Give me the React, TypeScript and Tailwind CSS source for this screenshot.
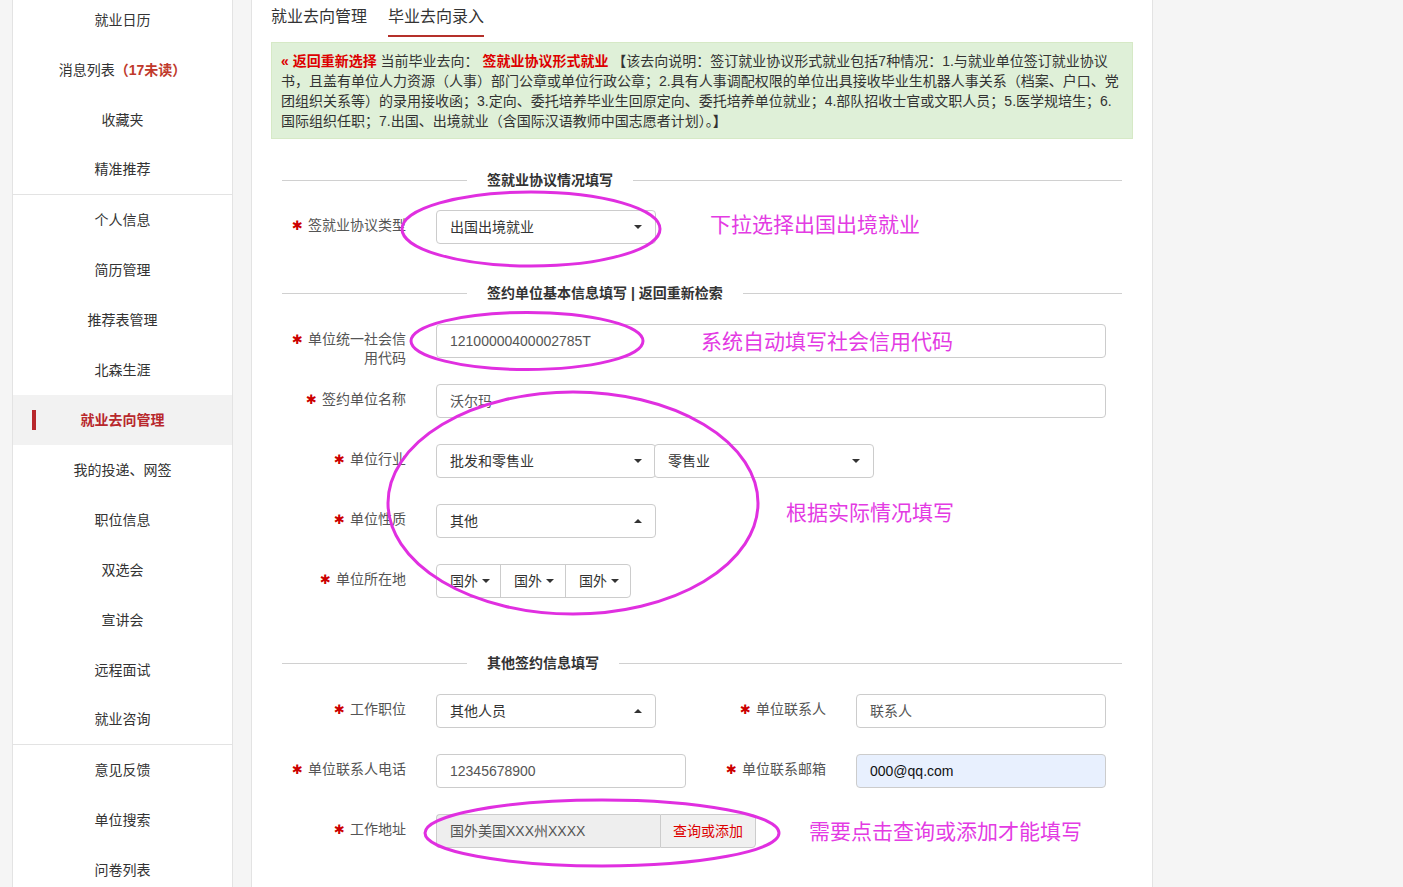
import React from "react";

const sideItems = [
  "就业日历",
  "消息列表",
  "收藏夹",
  "精准推荐",
  "个人信息",
  "简历管理",
  "推荐表管理",
  "北森生涯",
  "就业去向管理",
  "我的投递、网签",
  "职位信息",
  "双选会",
  "宣讲会",
  "远程面试",
  "就业咨询",
  "意见反馈",
  "单位搜索",
  "问卷列表",
];

const Caret = ({ up }: { up?: boolean }) =>
  up ? (
    <span className="inline-block w-0 h-0 border-x-[4px] border-x-transparent border-b-[4px] border-b-[#333]" />
  ) : (
    <span className="inline-block w-0 h-0 border-x-[4px] border-x-transparent border-t-[4px] border-t-[#333]" />
  );

const Label = ({ children, right }: { children: React.ReactNode; right?: boolean }) => (
  <div
    className={
      right
        ? "w-[140px] shrink-0 mr-[30px] pt-[6px] text-right text-[14px] leading-[18px] text-[#555]"
        : "w-[124px] shrink-0 mr-[30px] pt-[6px] text-right text-[14px] leading-[18px] text-[#555]"
    }
  >
    <span className="[font-family:'DejaVu_Sans',sans-serif] text-[13px] text-[#cc0000] mr-[5px]">✱</span>
    {children}
  </div>
);

const Select = ({ text, up, className }: { text: string; up?: boolean; className?: string }) => (
  <div
    className={
      "h-[34px] w-[220px] shrink-0 border border-[#ccc] rounded-[4px] bg-white pl-[13px] pr-[13px] flex items-center justify-between text-[14px] text-[#333] " +
      (className || "")
    }
  >
    <span>{text}</span>
    <Caret up={up} />
  </div>
);

const Input = ({ text, className }: { text: string; className?: string }) => (
  <div
    className={
      "h-[34px] shrink-0 border border-[#ccc] rounded-[4px] pl-[13px] flex items-center text-[14px] text-[#555] " +
      (className || "")
    }
  >
    {text}
  </div>
);

const SectionHeader = ({ children, className }: { children: React.ReactNode; className?: string }) => (
  <div className={"flex items-center h-[20px] " + (className || "")}>
    <div className="w-[185px] h-px bg-[#d0d0d0]" />
    <div className="px-[20px] text-[14px] font-bold text-[#333] leading-[20px]">{children}</div>
    <div className="flex-1 h-px bg-[#d0d0d0]" />
  </div>
);

const Row = ({ children, className }: { children: React.ReactNode; className?: string }) => (
  <div className={"flex h-[34px] items-start " + (className || "")}>{children}</div>
);

export default function App() {
  return (
    <div className="relative flex h-[887px] overflow-hidden bg-[#f5f5f5] [font-family:'Liberation_Sans','Noto_Sans_CJK_SC',sans-serif]">
      {/* Sidebar */}
      <aside className="ml-[12px] w-[221px] shrink-0 bg-white border-x border-[#e3e3e3]">
        <div className="-mt-[5px]">
          {sideItems.map((t, i) => {
            const active = i === 8;
            const divider = i === 3 || i === 14;
            return (
              <div
                key={t}
                className={
                  "relative h-[50px] flex items-center justify-center text-[14px] " +
                  (active ? "bg-[#f2f2f2] text-[#b8282c] font-bold " : "text-[#333] ") +
                  (divider ? "border-b border-[#e3e3e3]" : "")
                }
              >
                {active && <span className="absolute left-[19px] top-[15px] w-[4px] h-[20px] bg-[#b8282c]" />}
                {i === 1 ? (
                  <span>
                    消息列表<span className="text-[#c0392b] font-bold">（17未读）</span>
                  </span>
                ) : (
                  t
                )}
              </div>
            );
          })}
        </div>
      </aside>

      {/* Main */}
      <main className="ml-[18px] w-[902px] shrink-0 bg-white border-x border-[#e3e3e3] px-[19px]">
        {/* Tabs */}
        <div className="flex gap-[21px] pt-[6px] h-[37px]">
          <div className="text-[16px] leading-[22px] text-[#333]">就业去向管理</div>
          <div className="text-[16px] leading-[22px] text-[#333] border-b-2 border-[#b5302a] h-[31px]">毕业去向录入</div>
        </div>

        {/* Notice */}
        <div className="mt-[5px] border border-[#d6e9c6] bg-[#dff0d8] pt-[8px] pb-[7px] px-[9px] text-[14px] leading-[20px] text-[#333]">
          <span className="text-[#dd0000] font-bold">« 返回重新选择</span> 当前毕业去向：{" "}
          <span className="text-[#dd0000] font-bold">签就业协议形式就业</span>{" "}
          <span className="font-bold">【</span>该去向说明：签订就业协议形式就业包括7种情况：1.与就业单位签订就业协议书，且盖有单位人力资源（人事）部门公章或单位行政公章；2.具有人事调配权限的单位出具接收毕业生机器人事关系（档案、户口、党团组织关系等）的录用接收函；3.定向、委托培养毕业生回原定向、委托培养单位就业；4.部队招收士官或文职人员；5.医学规培生；6.国际组织任职；7.出国、出境就业（含国际汉语教师中国志愿者计划）。
          <span className="font-bold">】</span>
        </div>

        {/* Form */}
        <div className="px-[11px]">
          <SectionHeader className="mt-[31px]">签就业协议情况填写</SectionHeader>

          <Row className="mt-[20px]">
            <Label>签就业协议类型</Label>
            <Select text="出国出境就业" />
          </Row>

          <SectionHeader className="mt-[39px]">签约单位基本信息填写 | 返回重新检索</SectionHeader>

          <Row className="mt-[21px]">
            <Label>单位统一社会信用代码</Label>
            <Input text="12100000400002785T" className="w-[670px]" />
          </Row>

          <Row className="mt-[26px]">
            <Label>签约单位名称</Label>
            <Input text="沃尔玛" className="w-[670px]" />
          </Row>

          <Row className="mt-[26px]">
            <Label>单位行业</Label>
            <Select text="批发和零售业" />
            <Select text="零售业" className="-ml-[2px]" />
          </Row>

          <Row className="mt-[26px]">
            <Label>单位性质</Label>
            <Select text="其他" up />
          </Row>

          <Row className="mt-[26px]">
            <Label>单位所在地</Label>
            <div className="flex h-[34px] text-[14px] text-[#333]">
              <div className="w-[65px] border border-[#ccc] rounded-l-[4px] pl-[13px] flex items-center gap-[4px]">
                国外 <Caret />
              </div>
              <div className="w-[66px] -ml-px border border-[#ccc] pl-[13px] flex items-center gap-[4px]">
                国外 <Caret />
              </div>
              <div className="w-[66px] -ml-px border border-[#ccc] rounded-r-[4px] pl-[13px] flex items-center gap-[4px]">
                国外 <Caret />
              </div>
            </div>
          </Row>

          <SectionHeader className="mt-[55px]">其他签约信息填写</SectionHeader>

          <Row className="mt-[21px]">
            <Label>工作职位</Label>
            <div className="w-[250px] shrink-0">
              <Select text="其他人员" up />
            </div>
            <Label right>单位联系人</Label>
            <Input text="联系人" className="w-[250px]" />
          </Row>

          <Row className="mt-[26px]">
            <Label>单位联系人电话</Label>
            <Input text="12345678900" className="w-[250px]" />
            <Label right>单位联系邮箱</Label>
            <Input text="000@qq.com" className="w-[250px] bg-[#e8f0fe] !text-[#111]" />
          </Row>

          <Row className="mt-[26px]">
            <Label>工作地址</Label>
            <div className="flex h-[34px] text-[14px]">
              <div className="w-[224px] border border-r-0 border-[#ccc] rounded-l-[4px] bg-[#eeeeee] pl-[13px] flex items-center text-[#555]">
                国外美国XXX州XXXX
              </div>
              <div className="w-[96px] border border-[#ccc] rounded-r-[4px] bg-[#f0f0f0] flex items-center justify-center text-[#dd0000]">
                查询或添加
              </div>
            </div>
          </Row>
        </div>
      </main>

      {/* Annotation overlay */}
      <div className="pointer-events-none absolute inset-0">
        <svg className="absolute left-0 top-0" width="1403" height="887">
          <ellipse cx="531" cy="229" rx="129" ry="37" fill="none" stroke="#e02fe0" strokeWidth="3" />
          <ellipse cx="527" cy="341" rx="116" ry="28.5" fill="none" stroke="#e02fe0" strokeWidth="3" />
          <ellipse cx="573" cy="503" rx="185" ry="111" fill="none" stroke="#e02fe0" strokeWidth="3" />
          <ellipse cx="602" cy="833" rx="177" ry="33" fill="none" stroke="#e02fe0" strokeWidth="3" />
        </svg>
        <span className="absolute left-[710px] top-[214px] text-[21px] leading-[22px] text-[#e33be3] whitespace-nowrap">
          下拉选择出国出境就业
        </span>
        <span className="absolute left-[701px] top-[331px] text-[21px] leading-[22px] text-[#e33be3] whitespace-nowrap">
          系统自动填写社会信用代码
        </span>
        <span className="absolute left-[786px] top-[502px] text-[21px] leading-[22px] text-[#e33be3] whitespace-nowrap">
          根据实际情况填写
        </span>
        <span className="absolute left-[809px] top-[821px] text-[21px] leading-[22px] text-[#e33be3] whitespace-nowrap">
          需要点击查询或添加才能填写
        </span>
      </div>
    </div>
  );
}
